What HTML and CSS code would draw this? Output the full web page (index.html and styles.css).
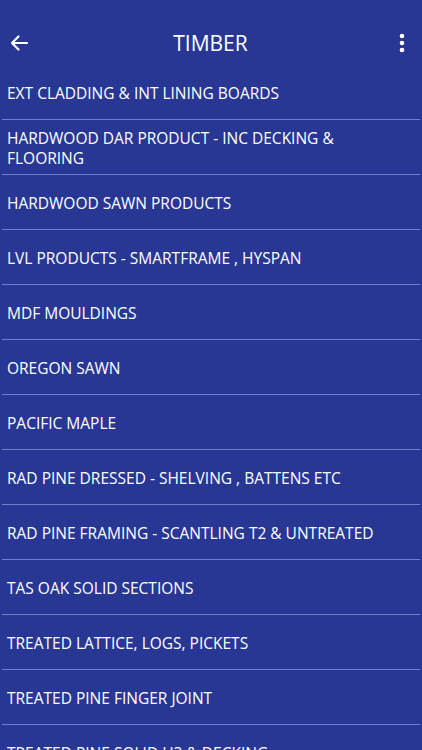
FILE: index.html
```html
<!DOCTYPE html>
<html>
<head>
<meta charset="utf-8">
<link rel="stylesheet" href="styles.css">
</head>
<body>
<div class="screen">
  <header class="bar">
    <button class="icon back" aria-label="Back">
      <svg width="20" height="20" viewBox="0 0 20 20"><path d="M18 10H3M9.5 3.5L3 10l6.5 6.5" fill="none" stroke="#fff" stroke-width="2.2" stroke-linecap="round" stroke-linejoin="round"/></svg>
    </button>
    <h1 class="title">TIMBER</h1>
    <button class="icon more" aria-label="More">
      <svg width="6" height="20" viewBox="0 0 6 20"><circle cx="3" cy="3" r="2.3" fill="#fff"/><circle cx="3" cy="10" r="2.3" fill="#fff"/><circle cx="3" cy="17" r="2.3" fill="#fff"/></svg>
    </button>
  </header>
  <ul class="list">
    <li class="item">EXT CLADDING &amp; INT LINING BOARDS</li>
    <li class="item">HARDWOOD DAR PRODUCT - INC DECKING &amp; FLOORING</li>
    <li class="item">HARDWOOD SAWN PRODUCTS</li>
    <li class="item">LVL PRODUCTS - SMARTFRAME , HYSPAN</li>
    <li class="item">MDF MOULDINGS</li>
    <li class="item">OREGON SAWN</li>
    <li class="item">PACIFIC MAPLE</li>
    <li class="item">RAD PINE DRESSED - SHELVING , BATTENS ETC</li>
    <li class="item">RAD PINE FRAMING - SCANTLING T2 &amp; UNTREATED</li>
    <li class="item">TAS OAK SOLID SECTIONS</li>
    <li class="item">TREATED LATTICE, LOGS, PICKETS</li>
    <li class="item">TREATED PINE FINGER JOINT</li>
    <li class="item">TREATED PINE SOLID H3 &amp; DECKING</li>
  </ul>
</div>
</body>
</html>
```
FILE: styles.css
```css
html, body {
  margin: 0;
  padding: 0;
  background: #283794;
}
.screen {
  width: 422px;
  height: 750px;
  overflow: hidden;
  background: #283794;
  color: #fff;
  font-family: "Open Sans", "Liberation Sans", sans-serif;
}
.bar {
  box-sizing: border-box;
  height: 65px;
  padding-top: 20px;
  display: flex;
  align-items: center;
  justify-content: space-between;
}
.icon {
  background: none;
  border: 0;
  padding: 0;
  width: 40px;
  height: 44px;
  display: flex;
  align-items: center;
  justify-content: center;
}
.back { margin-left: -1px; }
.title {
  margin: 0;
  font-size: 21px;
  font-weight: 400;
}
.list {
  list-style: none;
  margin: 0;
  padding: 0;
}
.item {
  box-sizing: border-box;
  height: 55px;
  margin-left: 2px;
  margin-right: 2px;
  padding: 2px 12px 0 5px;
  display: flex;
  align-items: center;
  font-size: 15.5px;
  line-height: 20px;
  border-bottom: 1px solid #6f7fcb;
}
```
